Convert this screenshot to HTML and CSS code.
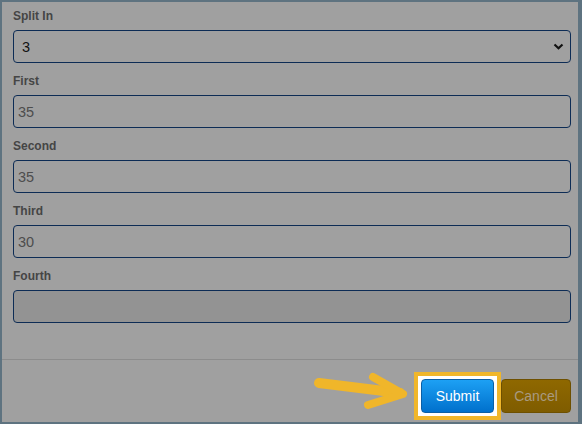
FILE: index.html
```html
<!DOCTYPE html>
<html>
<head>
<meta charset="utf-8">
<link rel="stylesheet" href="styles.css">
</head>
<body>
<div class="modal">
  <div class="form">
    <div class="field">
      <label class="label">Split In</label>
      <div class="select-wrap">
        <select class="control select"><option>3</option></select>
        <svg class="chevron" width="11" height="7" viewBox="0 0 11 7"><path d="M1.5 1.5 L5.5 5.2 L9.5 1.5" fill="none" stroke="#111" stroke-width="2.2"/></svg>
      </div>
    </div>
    <div class="field">
      <label class="label">First</label>
      <input class="control" value="35">
    </div>
    <div class="field">
      <label class="label">Second</label>
      <input class="control" value="35">
    </div>
    <div class="field">
      <label class="label">Third</label>
      <input class="control" value="30">
    </div>
    <div class="field">
      <label class="label">Fourth</label>
      <input class="control disabled" value="">
    </div>
  </div>
  <div class="footer">
    <span class="highlight"><button class="btn submit">Submit</button></span>
    <button class="btn cancel">Cancel</button>
  </div>
  <svg class="arrow" width="100" height="50" viewBox="0 0 100 50">
    <path d="M9 18 L90 28" fill="none" stroke="#f0b62a" stroke-width="10" stroke-linecap="round"/>
    <path d="M63 12 L93 29 L58 40" fill="none" stroke="#f0b62a" stroke-width="8" stroke-linecap="round" stroke-linejoin="round"/>
  </svg>
</div>
</body>
</html>
```
FILE: styles.css
```css
html, body {
  margin: 0;
  padding: 0;
  background: #5e7380;
  font-family: "Liberation Sans", Arial, sans-serif;
}
.modal {
  position: relative;
  margin: 2px 4px 2px 2px;
  height: 420px;
  background: #a0a0a0;
  display: flex;
  flex-direction: column;
}
.form {
  padding: 7px 7px 36px 11px;
  border-bottom: 1px solid #8c8c8c;
  display: flex;
  flex-direction: column;
  gap: 11px;
}
.field {
  display: flex;
  flex-direction: column;
}
.label {
  font-size: 12px;
  font-weight: bold;
  line-height: 15px;
  color: #454545;
  margin-bottom: 6px;
}
.control {
  box-sizing: border-box;
  width: 100%;
  height: 33px;
  border: 1px solid #0d2c55;
  border-radius: 4px;
  background: #a0a0a0;
  font-family: "Liberation Sans", Arial, sans-serif;
  font-size: 14.5px;
  color: #4d4d4d;
  padding: 0 0 0 4px;
  margin: 0;
  outline: none;
}
.disabled {
  background: #939393;
}
.select-wrap {
  position: relative;
}
.select {
  appearance: none;
  -webkit-appearance: none;
  color: #111;
  padding-left: 8px;
}
.chevron {
  position: absolute;
  right: 7px;
  top: 13px;
}
.footer {
  display: flex;
  justify-content: flex-end;
  align-items: flex-start;
  padding: 12px 7px 0 0;
}
.highlight {
  display: flex;
  border: 4px solid #f0b62a;
  padding: 3px;
  background: #fff;
}
.btn {
  height: 34px;
  border-radius: 4px;
  font-family: "Liberation Sans", Arial, sans-serif;
  font-size: 14px;
  padding: 0;
}
.submit {
  width: 73px;
  color: #fff;
  background: linear-gradient(#1da0f4, #0070cc);
  border: 1px solid #0b5fa5;
}
.cancel {
  width: 70px;
  margin-top: 7px;
  color: #a89a80;
  background: linear-gradient(#8f6800, #7f5c00);
  border: 1px solid #6e5000;
}
.arrow {
  position: absolute;
  left: 308px;
  top: 363px;
}
```
